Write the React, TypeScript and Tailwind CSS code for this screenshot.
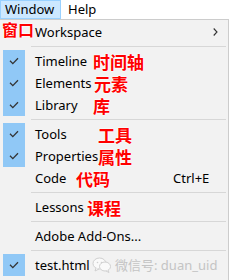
import React from "react";

const cjk = "font-['Noto_Sans_CJK_SC',sans-serif] font-bold text-[#ff0000] [text-shadow:0_0_2px_#fff,0_0_2px_#fff,0_0_1px_#fff]";

function Check() {
  return (
    <svg width="10" height="8" viewBox="0 0 10 8" fill="none">
      <path d="M1 3.8 L3.8 6.6 L9 1.2" stroke="#333" strokeWidth="1.3" />
    </svg>
  );
}

type RowProps = {
  label: string;
  checked?: boolean;
  note?: string;
  noteLeft?: string;
  shortcut?: string;
  arrow?: boolean;
  children?: React.ReactNode;
};

function Row({ label, checked, note, noteLeft, shortcut, arrow, children }: RowProps) {
  return (
    <div className="relative flex h-[22px] items-center">
      <div
        className={
          "ml-[3px] flex h-[22px] w-[22px] items-center justify-center " +
          (checked ? "bg-[#90c8f6]" : "")
        }
      >
        {checked ? <Check /> : null}
      </div>
      <span className="ml-[10px] text-black">{label}</span>
      {note ? (
        <span className={"absolute top-0 flex h-[22px] items-center text-[17px] leading-none " + cjk + " " + noteLeft}>
          {note}
        </span>
      ) : null}
      {shortcut ? <span className="absolute left-[173px] text-black">{shortcut}</span> : null}
      {arrow ? (
        <svg className="absolute left-[213px]" width="5" height="8" viewBox="0 0 5 8" fill="none">
          <path d="M0.7 0.5 L4 4 L0.7 7.5" stroke="#333" strokeWidth="1.1" />
        </svg>
      ) : null}
      {children}
    </div>
  );
}

function Sep() {
  return (
    <div className="flex h-[7px] items-center pl-[31px] pr-[2px]">
      <div className="h-px w-full bg-[#d7d7d7]" />
    </div>
  );
}

export default function App() {
  return (
    <div className="relative h-[280px] w-[230px] overflow-hidden bg-white font-['Noto_Sans',sans-serif] text-[13px] leading-none">
      <div className="flex h-[19px] items-stretch">
        <div className="flex w-[61px] items-center border border-[#99d1ff] bg-[#cce8ff] pl-[4px] text-black">Window</div>
        <div className="flex items-center pl-[7px] text-black">Help</div>
      </div>
      <div className="ml-[-1px] h-[270px] w-[230px] border border-[#cccccc] bg-[#f2f2f2] pt-[1px]">
        <Row label="Workspace" arrow>
          <span className={"absolute left-[2px] top-[0px] text-[16px] leading-none " + cjk}>窗口</span>
        </Row>
        <Sep />
        <Row label="Timeline" checked note="时间轴" noteLeft="left-[93px]" />
        <Row label="Elements" checked note="元素" noteLeft="left-[94px]" />
        <Row label="Library" checked note="库" noteLeft="left-[93px]" />
        <Sep />
        <Row label="Tools" checked note="工具" noteLeft="left-[98px]" />
        <Row label="Properties" checked note="属性" noteLeft="left-[98px]" />
        <Row label="Code" note="代码" noteLeft="left-[76px]" shortcut="Ctrl+E" />
        <Sep />
        <Row label="Lessons" note="课程" noteLeft="left-[87px]" />
        <Sep />
        <Row label="Adobe Add-Ons..." />
        <Sep />
        <Row label="test.html" checked>
          <div className="absolute left-[92px] flex items-center">
            <svg width="20" height="16" viewBox="0 0 20 16" fill="none">
              <ellipse cx="7.5" cy="6.5" rx="6.5" ry="5.5" fill="#fafafa" stroke="#d0d0d0" strokeWidth="1" />
              <path d="M4 11 L3 14 L7 12" fill="#fafafa" stroke="#d0d0d0" strokeWidth="1" />
              <ellipse cx="13" cy="9.5" rx="5.5" ry="4.5" fill="#fafafa" stroke="#d0d0d0" strokeWidth="1" />
              <path d="M16 13 L17 15.5 L14 14" fill="#fafafa" stroke="#d0d0d0" strokeWidth="1" />
              <circle cx="5.5" cy="5.5" r="0.8" fill="#d0d0d0" />
              <circle cx="9.5" cy="5.5" r="0.8" fill="#d0d0d0" />
            </svg>
            <span className="ml-[3px] font-['Noto_Sans','Noto_Sans_CJK_SC',sans-serif] text-[13px] text-[#c4c4c4]">微信号: duan_uid</span>
          </div>
        </Row>
      </div>
    </div>
  );
}
